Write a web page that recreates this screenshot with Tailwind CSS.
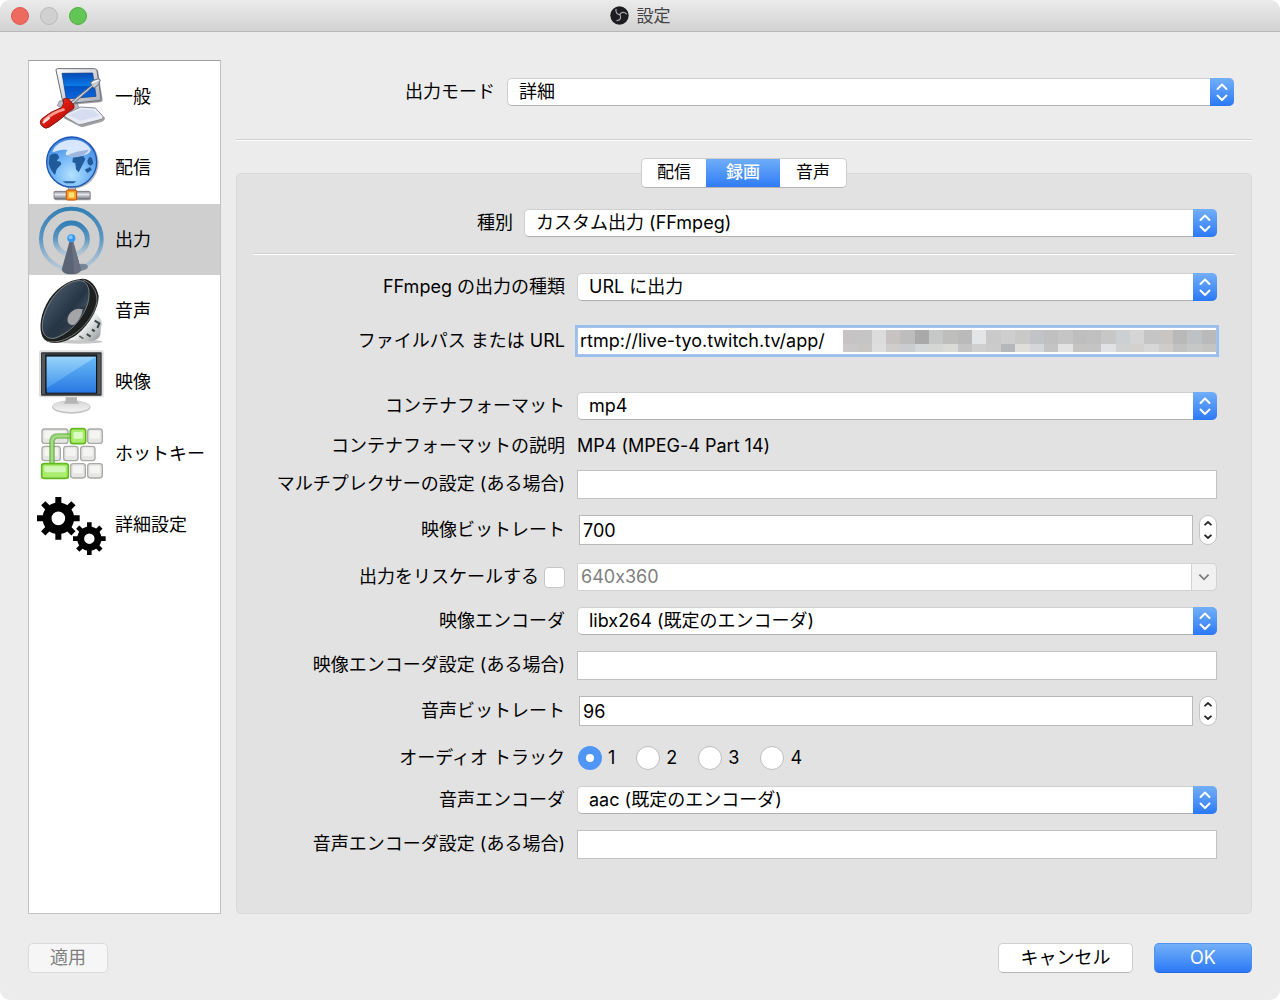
<!DOCTYPE html>
<html lang="ja">
<head>
<meta charset="utf-8">
<meta name="viewport" content="width=device-width, initial-scale=1">
<title>設定</title>
<script src="https://cdn.jsdelivr.net/npm/@tailwindcss/browser@4"></script>
</head>
<body class="bg-white font-['Inter','Noto_Sans_CJK_JP',sans-serif] text-[18px] leading-6 text-black [font-feature-settings:'calt'_0]">

<!-- Shared symbols -->
<svg class="hidden" aria-hidden="true">
  <symbol id="updown" viewBox="0 0 24 28">
    <path d="M7.500 11 12 6.500l4.500 4.500M7.500 17.500 12 22l4.500-4.500" fill="none" stroke="#fff" stroke-width="2" stroke-linecap="round" stroke-linejoin="round"/>
  </symbol>
  <symbol id="gear" viewBox="-64 -64 128 128" overflow="visible">
    <circle r="34" fill="none" stroke="#000" stroke-width="27"/>
    <path d="M-9-64H9V-42H-9ZM-9 42H9V64H-9ZM-64-9V9H-42V-9ZM42-9V9H64V-9Z"/>
    <path transform="rotate(45)" d="M-9-64H9V-42H-9ZM-9 42H9V64H-9ZM-64-9V9H-42V-9ZM42-9V9H64V-9Z"/>
  </symbol>
</svg>

<div class="flex min-h-screen flex-col overflow-hidden rounded-[10px] bg-[#ececec]">
  <header class="relative flex h-8 items-center justify-center gap-2 border-b border-[#b8b8b8] bg-linear-to-b from-[#ebebeb] to-[#d2d2d2] text-[17px] text-[#444]">
    <div class="absolute left-[11px] flex gap-[11px]">
      <button aria-label="閉じる" class="size-[18px] rounded-full border border-[#d95a50] bg-[#ee6a5f]"></button>
      <button aria-label="しまう" class="size-[18px] rounded-full border border-[#b9b9b9] bg-[#d0d0d0]"></button>
      <button aria-label="拡大" class="size-[18px] rounded-full border border-[#52ac43] bg-[#61c654]"></button>
    </div>
    <svg class="size-[19px]" viewBox="0 0 60 60" aria-hidden="true">
      <circle cx="30" cy="30" r="29" fill="#1d1c20"/>
      <g fill="none" stroke="#a9a9ab" stroke-width="4" stroke-linecap="round">
        <path d="M31 27C23 27 17 20 19 11"/>
        <path d="M31 27C35 19 45 18 52 25"/>
        <path d="M31 27C37 35 33 45 22 46"/>
      </g>
    </svg>
    <h1 class="pt-px">設定</h1>
  </header>

  <main class="flex flex-1 gap-[15px] px-7 pt-7">
    <nav class="w-[193px] shrink-0 border border-[#c3c3c3] border-t-[#a0a0a0] bg-white">
      <ul class="grid h-[500px] grid-rows-7">
        <li><a href="#general" class="flex h-full items-center gap-2 pl-2">
          <svg class="size-[70px]" viewBox="111 183 210 210" aria-hidden="true">
            <defs>
              <linearGradient id="scr" x1="0" y1="0" x2="0" y2="1"><stop offset="0" stop-color="#0649b4"/><stop offset=".5" stop-color="#0a7be8"/><stop offset=".52" stop-color="#0052c4"/><stop offset="1" stop-color="#0a67dc"/></linearGradient>
              <linearGradient id="shell" x1="0" y1="0" x2="1" y2="1"><stop offset="0" stop-color="#fff"/><stop offset="1" stop-color="#a9abb8"/></linearGradient>
              <linearGradient id="red" x1="0" y1="0" x2="1" y2="1"><stop offset="0" stop-color="#f0564a"/><stop offset=".5" stop-color="#d8190f"/><stop offset="1" stop-color="#8c0c08"/></linearGradient>
            </defs>
            <path d="M190 351 238 376Q244 379 252 377L304 363Q317 358 314 349L250 322 210 328Z" fill="#777" opacity=".7"/>
            <path d="M178 300 228 296 238 324 206 334 172 314Z" fill="#b8bac6" stroke="#777986" stroke-width="2"/>
            <path d="M188 343 242 318 286 321 309 346Q311 352 304 355L246 370Q238 372 232 369Z" fill="#e9ebf5" stroke="#8b8d9a" stroke-width="3"/>
            <path d="M204 342 246 325 280 328 298 344 242 359Z" fill="#d6ddf0"/>
            <path d="M172 211 294 207 308 298Q308 304 300 304L198 313Z" fill="#666" opacity=".6"/>
            <path d="M168 207Q168 203 173 203L283 203Q290 203 291 209L303 291Q304 298 297 299L198 308Q190 308 188 301Z" fill="url(#shell)" stroke="#696b78" stroke-width="3"/>
            <path d="M186 217 278 216 288 286 199 294Z" fill="url(#scr)" stroke="#063a84" stroke-width="2"/>
            <path d="M212 304 276 252 271 246 280 238 297 233 301 238 295 251 283 261 278 257 218 310Z" fill="#c9cbd2" stroke="#686b76" stroke-width="3" stroke-linejoin="round"/>
            <path d="M276 246 295 237" stroke="#fff" stroke-width="4"/>
            <path d="M190 294Q196 290 206 294L221 312Q226 321 216 326L206 332Q190 350 148 378 136 386 127 376 116 365 125 354 150 332 184 320 194 310 190 294Z" fill="url(#red)" stroke="#8c1511" stroke-width="3"/>
            <path d="M134 357Q160 334 190 326" fill="none" stroke="#ff9a92" stroke-width="9" stroke-linecap="round"/>
            <path d="M131 364 146 352" stroke="#fff" stroke-width="7" stroke-linecap="round" opacity=".8"/>
          </svg>一般</a></li>
        <li><a href="#stream" class="flex h-full items-center gap-2 pl-2">
          <svg class="size-[70px]" viewBox="111 399 210 210" aria-hidden="true">
            <defs>
              <radialGradient id="globe" cx=".5" cy=".75" r=".75"><stop offset="0" stop-color="#b5e2ff"/><stop offset=".5" stop-color="#70b4f6"/><stop offset="1" stop-color="#3e82dc"/></radialGradient>
              <linearGradient id="pipe" x1="0" y1="0" x2="0" y2="1"><stop offset="0" stop-color="#8a8c96"/><stop offset=".4" stop-color="#e6e7ee"/><stop offset="1" stop-color="#747681"/></linearGradient>
            </defs>
            <circle cx="219" cy="489" r="77" fill="#777" opacity=".5"/>
            <rect x="205" y="556" width="22" height="18" fill="#b9bbc4" stroke="#747681" stroke-width="2"/>
            <rect x="164" y="577" width="108" height="24" rx="3" fill="#555" opacity=".5"/>
            <rect x="162" y="574" width="108" height="23" rx="3" fill="url(#pipe)" stroke="#666872" stroke-width="2"/>
            <circle cx="215" cy="486" r="75" fill="url(#globe)" stroke="#1c55b6" stroke-width="4"/>
            <path d="M149 467Q160 458 172 462L178 472 170 482 182 486 184 493 170 508 165 525Q151 512 146 490ZM219 473 250 468 256 478 250 490 244 502 236 517 228 508 226 490 217 486ZM262 482 268 470 276 474 280 490 272 498 264 492ZM254 509 270 501 276 509 262 519ZM187 544H229L221 550H198Z" fill="#185190" opacity=".9"/>
            <path d="M157 457C167 414 248 403 272 448 275 461 248 469 224 471 196 471 192 462 203 450 181 447 173 453 157 457Z" fill="#e6efff" opacity=".9"/>
            <path d="M196 469Q230 451 267 449 258 467 224 471Z" fill="#7893ca" opacity=".6"/>
            <rect x="199" y="570" width="31" height="30" rx="4" fill="#f99a1c" stroke="#c44d0a" stroke-width="3"/>
            <rect x="206" y="577" width="17" height="16" fill="#ffe17a"/>
          </svg>配信</a></li>
        <li class="bg-[#cfcfcf]"><a href="#output" aria-current="page" class="flex h-full items-center gap-2 pl-2">
          <svg class="size-[70px]" viewBox="51 14 210 210" aria-hidden="true">
            <defs>
              <linearGradient id="wave" x1="0" y1="0" x2="0" y2="1"><stop offset="0" stop-color="#3380b5"/><stop offset=".5" stop-color="#5c97c2"/><stop offset="1" stop-color="#a6c3da" stop-opacity=".55"/></linearGradient>
            </defs>
            <circle cx="154" cy="116" r="91" fill="none" stroke="url(#wave)" stroke-width="12"/>
            <circle cx="154" cy="116" r="48" fill="none" stroke="url(#wave)" stroke-width="15"/>
            <path d="M168 192Q204 186 204 199 204 208 176 213Z" fill="#667689" opacity=".8"/>
            <path d="M150 118H158L183 208Q178 222 154 222 130 222 125 208Z" fill="#5b6474"/>
            <path d="M154 120 163 220Q182 217 183 208L158 118Z" fill="#697080"/>
            <circle cx="154" cy="114" r="12" fill="#3598f3"/>
            <circle cx="152" cy="111" r="6" fill="#7fc8ff"/>
          </svg>出力</a></li>
        <li><a href="#audio" class="flex h-full items-center gap-2 pl-2">
          <svg class="size-[70px]" viewBox="51 228 210 210" aria-hidden="true">
            <defs>
              <linearGradient id="cone" x1="0" y1="0" x2="1" y2="1"><stop offset="0" stop-color="#59697a"/><stop offset=".55" stop-color="#263544"/><stop offset="1" stop-color="#6f7e8c"/></linearGradient>
              <linearGradient id="mag" x1="0" y1="0" x2="1" y2="1"><stop offset="0" stop-color="#6c7475"/><stop offset=".5" stop-color="#eef1f1"/><stop offset="1" stop-color="#8a9190"/></linearGradient>
            </defs>
            <ellipse cx="178" cy="425" rx="70" ry="6" fill="#999" opacity=".55"/>
            <path d="M214 325 240 355Q249 366 243 382L241 404Q237 418 216 423L160 421 150 408Z" fill="url(#mag)"/>
            <path d="M224 362 238 370 232 384M200 402 212 410M216 388 224 394" fill="none" stroke="#3b4444" stroke-width="6"/>
            <path d="M178 408 190 416" stroke="#5b6464" stroke-width="5"/>
            <path d="M182 237C206 233 229 254 236 288 237 320 212 372 170 404 131 432 91 436 72 417 57 400 57 355 79 313 103 267 145 239 182 237Z" fill="#1e201f"/>
            <path d="M188 239C212 247 232 272 231 303 225 342 194 384 154 408 128 424 99 430 80 423" fill="none" stroke="#737a78" stroke-width="3"/>
            <path d="M182 242C203 244 213 270 204 308 192 349 158 392 117 410 91 423 71 412 67 387 63 341 98 278 142 253 158 244 171 241 182 242Z" fill="url(#cone)" stroke="#9aa4ac" stroke-width="2"/>
            <path d="M199 318C180 318 143 336 138 366 126 370 105 390 96 412 138 408 186 364 199 318Z" fill="#1d2833" opacity=".4"/>
            <path d="M188 328C164 320 138 343 143 365 147 374 156 377 165 373 176 362 186 345 188 328Z" fill="#a3a5a6"/>
          </svg>音声</a></li>
        <li><a href="#video" class="flex h-full items-center gap-2 pl-2">
          <svg class="size-[70px]" viewBox="51 22 210 210" aria-hidden="true">
            <defs>
              <linearGradient id="lcd" x1="0" y1="0" x2="0" y2="1"><stop offset="0" stop-color="#6abbf6"/><stop offset="1" stop-color="#2878e4"/></linearGradient>
              <linearGradient id="lcdlight" x1="0" y1="0" x2="0" y2="1"><stop offset="0" stop-color="#a7dcfb"/><stop offset="1" stop-color="#4b9df0"/></linearGradient>
              <linearGradient id="stand" x1="0" y1="0" x2="0" y2="1"><stop offset="0" stop-color="#d4d4d4"/><stop offset="1" stop-color="#f4f4f4"/></linearGradient>
            </defs>
            <ellipse cx="154" cy="202" rx="58" ry="20" fill="#c4c4c4"/>
            <ellipse cx="154" cy="200" rx="55" ry="17" fill="url(#stand)"/>
            <path d="M137 168H171V182Q171 188 178 192H130Q137 188 137 182Z" fill="#b5b5b5"/>
            <rect x="57" y="32" width="194" height="141" rx="6" fill="#dedede"/>
            <rect x="63" y="38" width="182" height="130" rx="3" fill="#333538"/>
            <path d="M66 42H76V164H66ZM232 42H242V164H232Z" fill="#55585b"/>
            <rect x="76" y="47" width="155" height="114" fill="#101315"/>
            <rect x="80" y="51" width="148" height="108" fill="url(#lcd)"/>
            <path d="M80 51H228L80 146Z" fill="url(#lcdlight)" opacity=".75"/>
          </svg>映像</a></li>
        <li><a href="#hotkeys" class="flex h-full items-center gap-2 pl-2">
          <svg class="size-[70px]" viewBox="51 237 210 210" aria-hidden="true">
            <g fill="#e6e7e5" stroke="#a9aba8" stroke-width="4">
              <rect x="66" y="267" width="78" height="43" rx="8"/>
              <rect x="203" y="267" width="44" height="43" rx="8"/>
              <rect x="66" y="319" width="55" height="43" rx="8"/>
              <rect x="131" y="319" width="43" height="43" rx="8"/>
              <rect x="182" y="319" width="43" height="43" rx="8"/>
              <rect x="152" y="371" width="44" height="43" rx="8"/>
              <rect x="203" y="371" width="44" height="43" rx="8"/>
            </g>
            <g fill="#f4f4f3">
              <rect x="73" y="273" width="64" height="23" rx="4"/><rect x="210" y="273" width="30" height="23" rx="4"/>
              <rect x="73" y="325" width="41" height="23" rx="4"/><rect x="138" y="325" width="29" height="23" rx="4"/><rect x="189" y="325" width="29" height="23" rx="4"/>
              <rect x="159" y="377" width="30" height="23" rx="4"/><rect x="210" y="377" width="30" height="23" rx="4"/>
            </g>
            <path d="M96 372V306Q96 288 114 288H152" fill="none" stroke="#5eae36" stroke-width="17" opacity=".75"/>
            <path d="M96 372V306Q96 288 114 288H152" fill="none" stroke="#a5dc83" stroke-width="7"/>
            <g fill="#a9ec6e" stroke="#63b81f" stroke-width="5">
              <rect x="151" y="266" width="46" height="45" rx="8"/>
              <rect x="65" y="371" width="80" height="44" rx="8"/>
            </g>
            <rect x="160" y="276" width="28" height="20" rx="4" fill="#dcfac6"/>
            <rect x="73" y="379" width="64" height="18" rx="4" fill="#d2f7b6"/>
          </svg>ホットキー</a></li>
        <li><a href="#advanced" class="flex h-full items-center gap-2 pl-2">
          <svg class="size-[70px]" viewBox="51 451 210 210" aria-hidden="true">
            <use href="#gear" x="51" y="472" width="128" height="128"/>
            <use href="#gear" x="159" y="548" width="98" height="98"/>
          </svg>詳細設定</a></li>
      </ul>
    </nav>

    <section class="flex min-w-0 flex-1 flex-col">
      <div class="mt-[17px] flex h-[30px] items-center gap-3 pr-[18px]">
        <label for="mode" class="w-[259px] shrink-0 text-right">出力モード</label>
        <div class="relative flex-1">
          <select id="mode" class="block h-7 w-full appearance-none rounded-[5px] border border-[#cfcfcf] border-b-[#b0b0b0] bg-white px-[11px] leading-6"><option>詳細</option></select>
          <svg class="pointer-events-none absolute top-0 right-0 h-7 w-6 rounded-r-[5px] bg-linear-to-b from-[#72aff7] to-[#2b78f6]" aria-hidden="true"><use href="#updown"/></svg>
        </div>
      </div>
      <hr class="mt-8 h-[2px] border-t border-b border-t-[#cfcfcf] border-b-white">

      <div role="tablist" class="z-10 mt-[17px] flex h-[30px] self-center overflow-hidden rounded-[5px] border border-[#cdcdcd] border-b-[#b4b4b4] bg-white text-[17px]">
        <button role="tab" class="w-16 pb-[2px]">配信</button>
        <button role="tab" aria-selected="true" class="w-[74px] bg-linear-to-b from-[#6fadf7] to-[#2f7bf6] pb-[2px] font-medium text-white">録画</button>
        <button role="tab" class="w-[66px] pb-[2px]">音声</button>
      </div>

      <form class="-mt-[15px] flex flex-1 flex-col rounded-[5px] border border-[#d9d9d9] bg-[#e2e2e2] pt-[34px]">
        <div class="flex h-[30px] items-center gap-[11px] pr-[34px] pl-4">
          <label for="type" class="w-[260px] shrink-0 text-right">種別</label>
          <div class="relative flex-1">
            <select id="type" class="block h-7 w-full appearance-none rounded-[5px] border border-[#cfcfcf] border-b-[#b0b0b0] bg-white px-[11px] leading-6"><option>カスタム出力 (FFmpeg)</option></select>
            <svg class="pointer-events-none absolute top-0 right-0 h-7 w-6 rounded-r-[5px] bg-linear-to-b from-[#72aff7] to-[#2b78f6]" aria-hidden="true"><use href="#updown"/></svg>
          </div>
        </div>
        <hr class="mx-4 mt-[15px] h-[2px] border-t border-b border-t-[#d0d0d0] border-b-white">

        <div class="mt-[17px] flex h-[30px] items-center gap-3 pr-[34px] pl-4">
          <label for="fftype" class="w-78 shrink-0 text-right">FFmpeg の出力の種類</label>
          <div class="relative flex-1">
            <select id="fftype" class="block h-7 w-full appearance-none rounded-[5px] border border-[#cfcfcf] border-b-[#b0b0b0] bg-white px-[11px] leading-6"><option>URL に出力</option></select>
            <svg class="pointer-events-none absolute top-0 right-0 h-7 w-6 rounded-r-[5px] bg-linear-to-b from-[#72aff7] to-[#2b78f6]" aria-hidden="true"><use href="#updown"/></svg>
          </div>
        </div>
        <div class="mt-6 flex h-[30px] items-center gap-3 pr-[34px] pl-4">
          <label for="url" class="w-78 shrink-0 text-right">ファイルパス または URL</label>
          <div class="flex h-7 flex-1 items-center border border-[#a9c3e8] bg-white ring-2 ring-[#9abfee]">
            <input id="url" type="text" value="rtmp://live-tyo.twitch.tv/app/" class="w-[265px] shrink-0 pl-[2px] outline-none">
            <svg id="mask" class="h-[22px] min-w-0 flex-1" viewBox="0 0 26 22" preserveAspectRatio="none" shape-rendering="crispEdges" aria-hidden="true"></svg>
          </div>
        </div>
        <div class="mt-[35px] flex h-[30px] items-center gap-3 pr-[34px] pl-4">
          <label for="container" class="w-78 shrink-0 text-right">コンテナフォーマット</label>
          <div class="relative flex-1">
            <select id="container" class="block h-7 w-full appearance-none rounded-[5px] border border-[#cfcfcf] border-b-[#b0b0b0] bg-white px-[11px] leading-6"><option>mp4</option></select>
            <svg class="pointer-events-none absolute top-0 right-0 h-7 w-6 rounded-r-[5px] bg-linear-to-b from-[#72aff7] to-[#2b78f6]" aria-hidden="true"><use href="#updown"/></svg>
          </div>
        </div>
        <div class="mt-[10px] flex h-[30px] items-center gap-3 pr-[34px] pl-4">
          <span class="w-78 shrink-0 text-right">コンテナフォーマットの説明</span>
          <span>MP4 (MPEG-4 Part 14)</span>
        </div>
        <div class="mt-2 flex h-[30px] items-center gap-3 pr-[34px] pl-4">
          <label for="mux" class="w-78 shrink-0 text-right">マルチプレクサーの設定 (ある場合)</label>
          <input id="mux" type="text" class="h-[29px] min-w-0 flex-1 border border-[#c2c2c2] bg-white px-1">
        </div>
        <div class="mt-4 flex h-[30px] items-center gap-3 pr-[34px] pl-4">
          <label for="vbit" class="w-78 shrink-0 text-right">映像ビットレート</label>
          <div class="flex flex-1 items-center gap-[6px] pl-[2px]">
            <input id="vbit" type="text" inputmode="numeric" value="700" class="h-[30px] min-w-0 flex-1 border border-[#b9b9b9] bg-white px-[3px]">
            <div class="flex h-[30px] w-[18px] flex-col rounded-full border border-[#c4c4c4] bg-white">
              <button type="button" aria-label="増やす" class="flex flex-1 items-end justify-center pb-1"><svg class="h-[5px] w-2" viewBox="0 0 8 5" aria-hidden="true"><path d="M.5 4.200 4 1l3.500 3.200" fill="none" stroke="#222" stroke-width="1.800"/></svg></button>
              <button type="button" aria-label="減らす" class="flex flex-1 items-start justify-center pt-1"><svg class="h-[5px] w-2" viewBox="0 0 8 5" aria-hidden="true"><path d="M.5.8 4 4 7.500.8" fill="none" stroke="#222" stroke-width="1.800"/></svg></button>
            </div>
          </div>
        </div>
        <div class="mt-[17px] flex h-[30px] items-center gap-3 pr-[34px] pl-4">
          <div class="flex w-78 shrink-0 items-center justify-end gap-[5px]">
            <label for="rescale">出力をリスケールする</label>
            <input id="rescale" type="checkbox" class="size-[21px] appearance-none rounded-[4px] border border-[#c6c6c6] bg-white">
          </div>
          <div class="relative flex-1">
            <select aria-label="出力解像度" disabled class="block h-7 w-full appearance-none rounded-r-[5px] border border-[#d2d2d2] bg-white px-[3px] leading-6 text-[#7f7f7f] opacity-100"><option>640x360</option></select>
            <svg class="pointer-events-none absolute top-0 right-0 h-7 w-[26px] rounded-r-[5px] border border-[#d2d2d2] bg-[#f1f1f1]" viewBox="0 0 26 28" aria-hidden="true"><path d="M8 11.500l5 5 5-5" fill="none" stroke="#7d7d7d" stroke-width="2"/></svg>
          </div>
        </div>
        <div class="mt-[14px] flex h-[30px] items-center gap-3 pr-[34px] pl-4">
          <label for="venc" class="w-78 shrink-0 text-right">映像エンコーダ</label>
          <div class="relative flex-1">
            <select id="venc" class="block h-7 w-full appearance-none rounded-[5px] border border-[#cfcfcf] border-b-[#b0b0b0] bg-white px-[11px] leading-6"><option>libx264 (既定のエンコーダ)</option></select>
            <svg class="pointer-events-none absolute top-0 right-0 h-7 w-6 rounded-r-[5px] bg-linear-to-b from-[#72aff7] to-[#2b78f6]" aria-hidden="true"><use href="#updown"/></svg>
          </div>
        </div>
        <div class="mt-[14px] flex h-[30px] items-center gap-3 pr-[34px] pl-4">
          <label for="vopt" class="w-78 shrink-0 text-right">映像エンコーダ設定 (ある場合)</label>
          <input id="vopt" type="text" class="h-[29px] min-w-0 flex-1 border border-[#c2c2c2] bg-white px-1">
        </div>
        <div class="mt-4 flex h-[30px] items-center gap-3 pr-[34px] pl-4">
          <label for="abit" class="w-78 shrink-0 text-right">音声ビットレート</label>
          <div class="flex flex-1 items-center gap-[6px] pl-[2px]">
            <input id="abit" type="text" inputmode="numeric" value="96" class="h-[30px] min-w-0 flex-1 border border-[#b9b9b9] bg-white px-[3px]">
            <div class="flex h-[30px] w-[18px] flex-col rounded-full border border-[#c4c4c4] bg-white">
              <button type="button" aria-label="増やす" class="flex flex-1 items-end justify-center pb-1"><svg class="h-[5px] w-2" viewBox="0 0 8 5" aria-hidden="true"><path d="M.5 4.200 4 1l3.500 3.200" fill="none" stroke="#222" stroke-width="1.800"/></svg></button>
              <button type="button" aria-label="減らす" class="flex flex-1 items-start justify-center pt-1"><svg class="h-[5px] w-2" viewBox="0 0 8 5" aria-hidden="true"><path d="M.5.8 4 4 7.500.8" fill="none" stroke="#222" stroke-width="1.800"/></svg></button>
            </div>
          </div>
        </div>
        <div class="mt-[17px] flex h-[30px] items-center gap-3 pr-[34px] pl-4" role="radiogroup" aria-labelledby="track">
          <span id="track" class="w-78 shrink-0 text-right">オーディオ トラック</span>
          <div class="flex gap-[21px] pl-px">
            <label class="flex items-center gap-[6px]"><input type="radio" name="track" checked class="size-6 appearance-none rounded-full border border-[#bdbdbd] bg-white checked:border-8 checked:border-[#4f96f6]">1</label>
            <label class="flex items-center gap-[6px]"><input type="radio" name="track" class="size-6 appearance-none rounded-full border border-[#bdbdbd] bg-white checked:border-8 checked:border-[#4f96f6]">2</label>
            <label class="flex items-center gap-[6px]"><input type="radio" name="track" class="size-6 appearance-none rounded-full border border-[#bdbdbd] bg-white checked:border-8 checked:border-[#4f96f6]">3</label>
            <label class="flex items-center gap-[6px]"><input type="radio" name="track" class="size-6 appearance-none rounded-full border border-[#bdbdbd] bg-white checked:border-8 checked:border-[#4f96f6]">4</label>
          </div>
        </div>
        <div class="mt-3 flex h-[30px] items-center gap-3 pr-[34px] pl-4">
          <label for="aenc" class="w-78 shrink-0 text-right">音声エンコーダ</label>
          <div class="relative flex-1">
            <select id="aenc" class="block h-7 w-full appearance-none rounded-[5px] border border-[#cfcfcf] border-b-[#b0b0b0] bg-white px-[11px] leading-6"><option>aac (既定のエンコーダ)</option></select>
            <svg class="pointer-events-none absolute top-0 right-0 h-7 w-6 rounded-r-[5px] bg-linear-to-b from-[#72aff7] to-[#2b78f6]" aria-hidden="true"><use href="#updown"/></svg>
          </div>
        </div>
        <div class="mt-[14px] flex h-[30px] items-center gap-3 pr-[34px] pl-4">
          <label for="aopt" class="w-78 shrink-0 text-right">音声エンコーダ設定 (ある場合)</label>
          <input id="aopt" type="text" class="h-[29px] min-w-0 flex-1 border border-[#c2c2c2] bg-white px-1">
        </div>
      </form>
    </section>
  </main>

  <footer class="flex gap-[21px] px-7 pt-[29px] pb-[27px]">
    <button disabled class="mr-auto h-[30px] w-20 rounded-[5px] border border-[#dadada] bg-[#f6f6f6] text-[#7f7f7f]">適用</button>
    <button class="h-[30px] w-[135px] rounded-[5px] border border-[#cfcfcf] border-b-[#b4b4b4] bg-white">キャンセル</button>
    <button class="h-[30px] w-[98px] rounded-[5px] border border-[#4f93f0] border-b-[#2467e0] bg-linear-to-b from-[#72aff7] to-[#2b78f6] text-white">OK</button>
  </footer>
</div>

<script>
  // Mosaic that hides the stream key: two bands of tiles
  const bands = [
    [0, 14, 'c5c3c3 c5c5c5 dcdcdd c6c3c2 bdbdbd a9a9a9 c6c8c7 bebebc bababa e4e5e7 cacaca cecece c9c9c7 c2c3c7 c0c0c0 c5c5c5 bebebe c0c0c0 c7c7c7 ccd0d3 d5d5d5 c5c5c5 c9c5c2 b9b9b9 bfc2c5 bababa'],
    [14, 8, 'cac8c8 c9c7c6 dedede d0cecd cbccd0 d4d7d7 d5d7d5 dadad7 c4c4c4 cfcfcf cbcbcb b5b7bb e0deda d5d6da c4c4c4 e3e3e3 c6c4c2 c4c4c4 e0e2e5 d0d1d1 d3d0cd d7d7d7 d0ccc9 c2c2c2 c6c8c8 c4c4c2']
  ];
  document.getElementById('mask').innerHTML = bands.map(([y, h, row]) =>
    row.split(' ').map((c, x) => `<rect x="${x}" y="${y}" width="1" height="${h}" fill="#${c}"/>`).join('')).join('');
</script>
</body>
</html>
